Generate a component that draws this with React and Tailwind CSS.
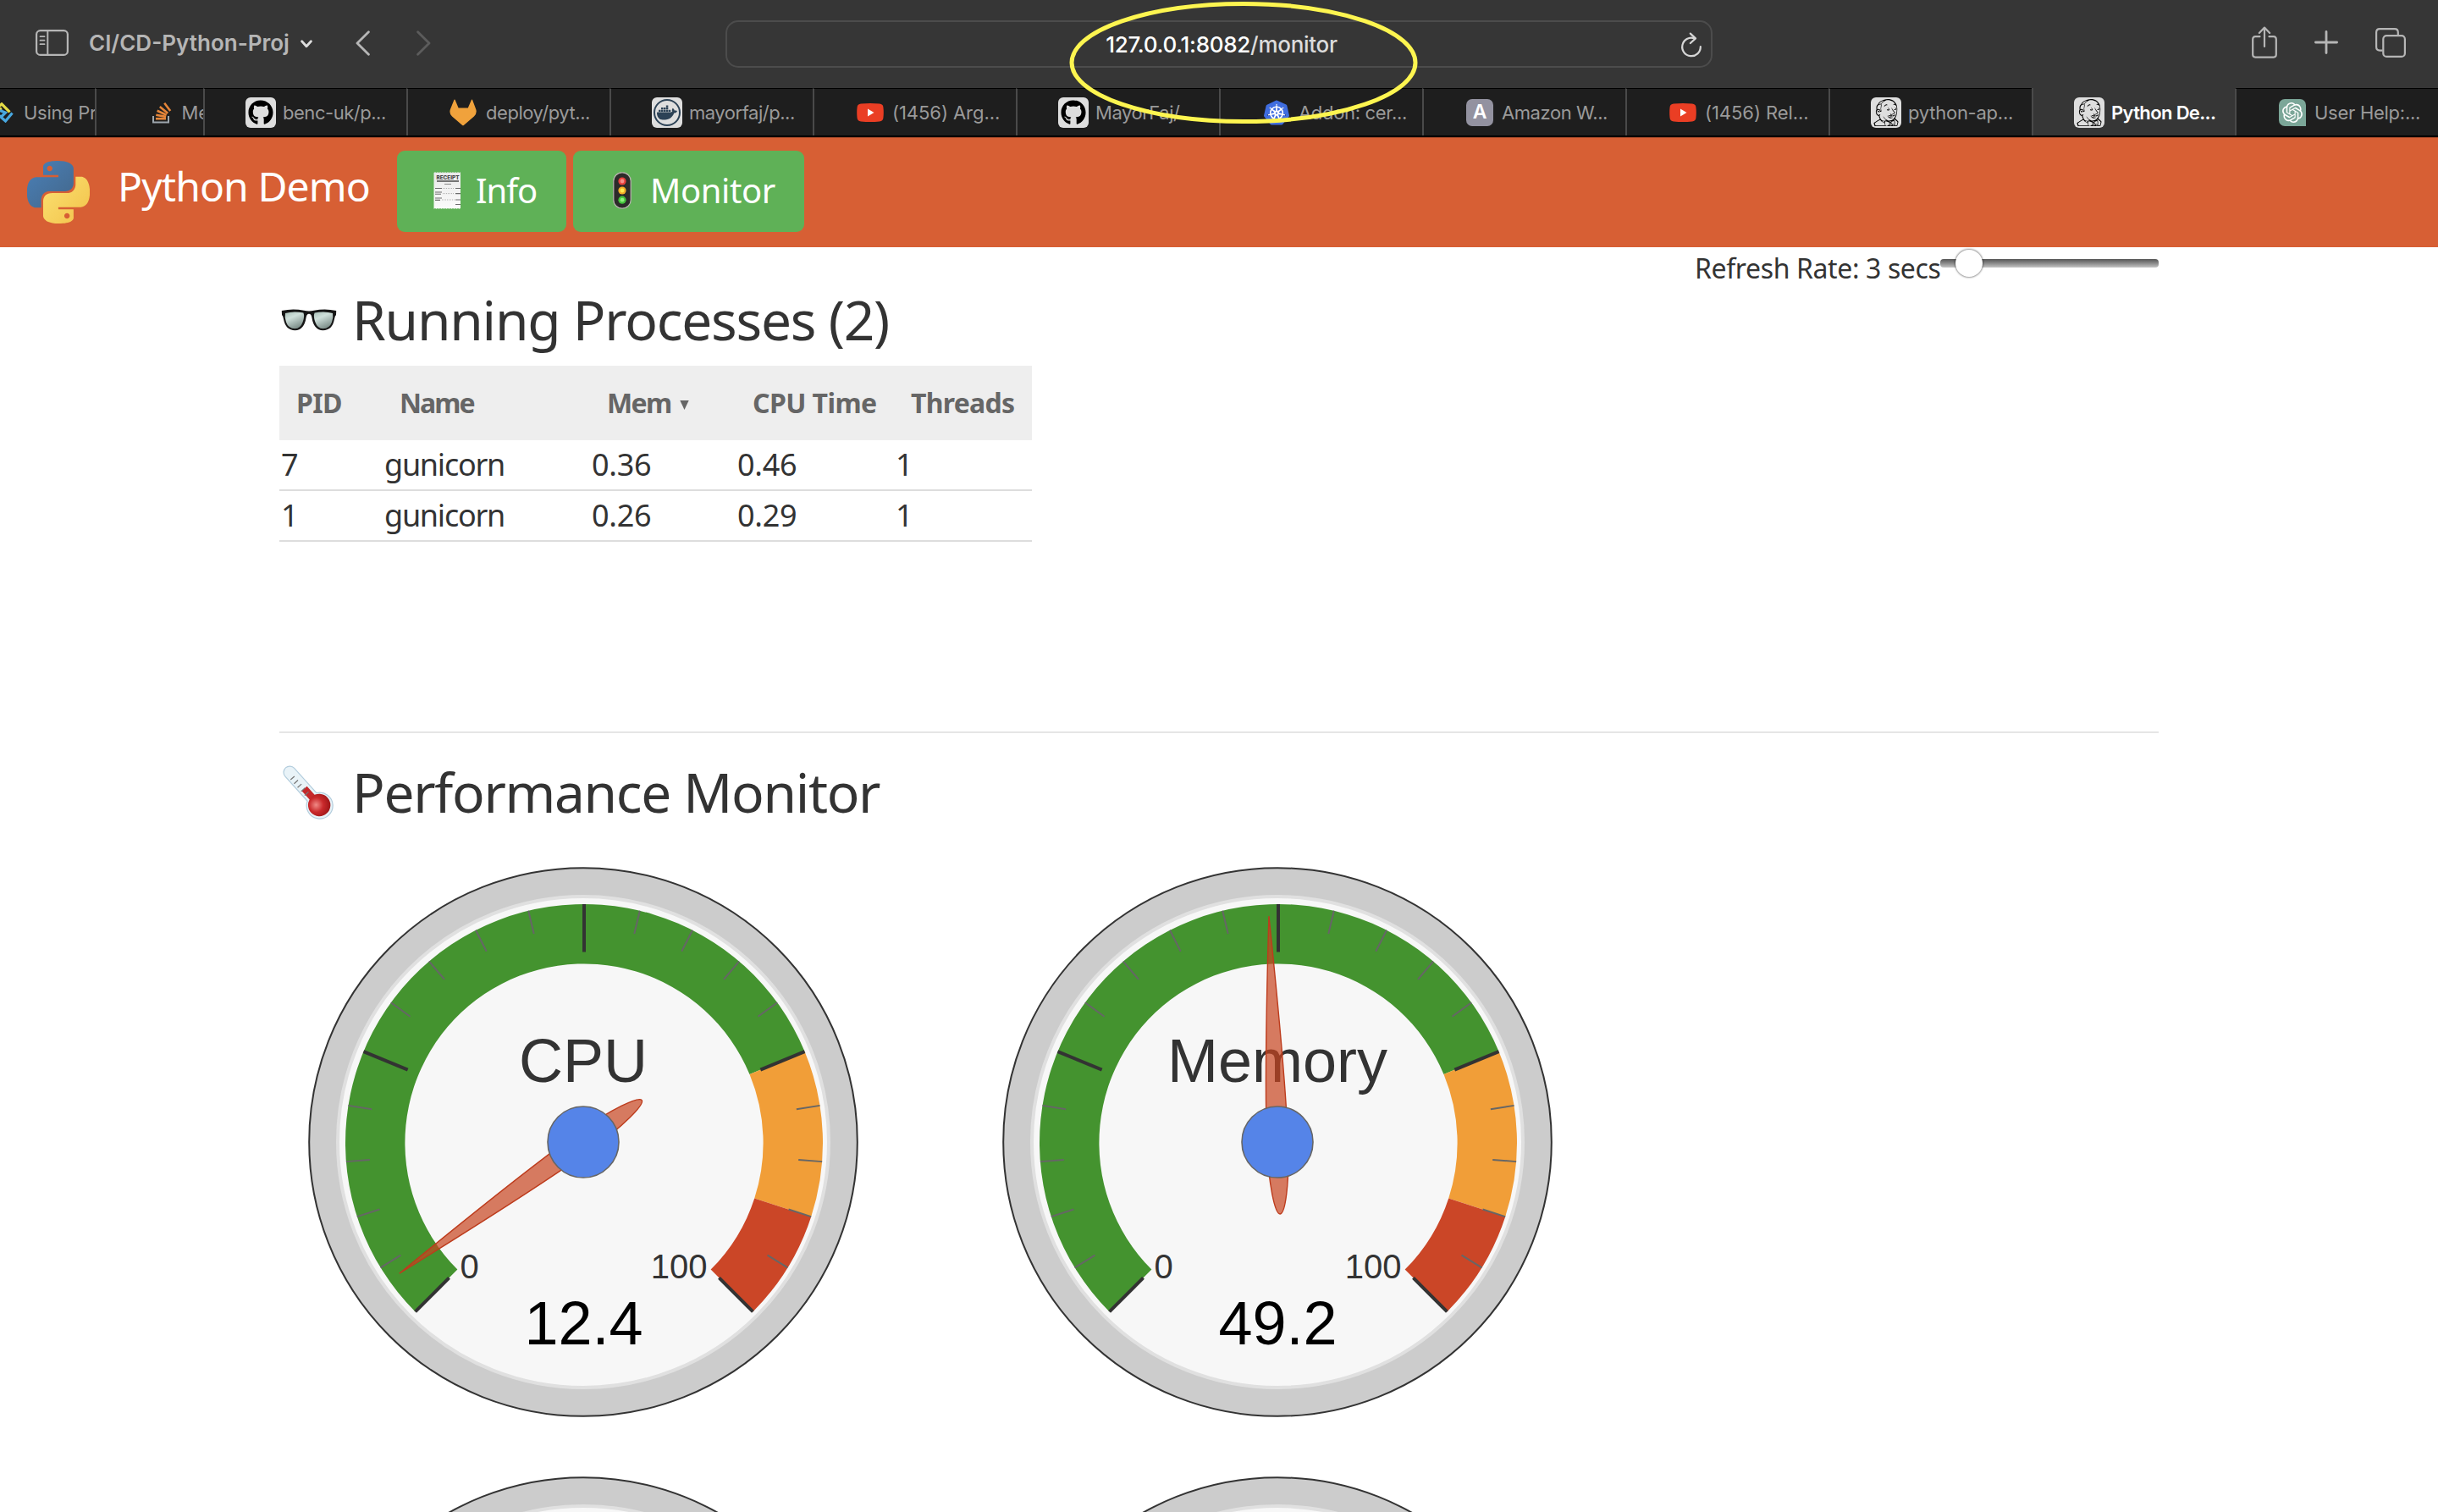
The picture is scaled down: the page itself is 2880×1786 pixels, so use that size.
import React from "react";
import { SiDocker, SiKubernetes, SiJenkins, SiOpenai } from "react-icons/si";
import { FaGithub } from "react-icons/fa";

/* ---------- Tab favicons ---------- */

function Tile({ children }) {
  return (
    <span className="flex h-9 w-9 items-center justify-center rounded-[6px] bg-[#dedede] text-black">{children}</span>
  );
}

const GithubIcon = () => (
  <Tile>
    <FaGithub className="h-[30px] w-[30px]" />
  </Tile>
);

const DockerIcon = () => (
  <Tile>
    <span className="flex h-8 w-8 items-center justify-center rounded-full border-2 border-[#2c4256]">
      <SiDocker className="h-6 w-6 text-[#2c4256]" />
    </span>
  </Tile>
);

const JenkinsIcon = () => (
  <Tile>
    <SiJenkins className="h-8 w-8" />
  </Tile>
);

const GitlabIcon = () => (
  <svg className="mr-[3px] ml-px h-8 w-8" viewBox="0 0 32 32" fill="#f0a23c">
    <path d="M6.5 0.8 L10.6 10.5 H21.8 L26 0.8 Q26.6 0.2 27 0.8 L31.4 12.5 Q32.6 17.4 29 20.5 L16.8 31 Q16 31.6 15.2 31 L3 20.5 Q-.6 17.4 .8 12.5 L5.5 0.8 Q6 0.2 6.5 0.8 Z" />
  </svg>
);

const YoutubeIcon = () => (
  <svg className="mx-0.5 h-8 w-8" viewBox="0 0 32 32">
    <path d="M5 5.6 Q16 4.2 27 5.6 Q31 6 31.4 9.5 Q32.2 16 31.4 22.5 Q31 26 27 26.4 Q16 27.8 5 26.4 Q1 26 .6 22.5 Q-.2 16 .6 9.5 Q1 6 5 5.6 Z" fill="#ea3e24" />
    <path d="M13 11.4 L20.5 16 L13 20.6 Z" fill="#fff" />
  </svg>
);

const KubernetesIcon = () => (
  <span className="mx-0.5 flex h-8 w-8 items-center justify-center bg-[radial-gradient(circle,#fff_10px,transparent_11px)]">
    <SiKubernetes className="h-[30px] w-[30px] text-[#3f6de0]" />
  </span>
);

const LetterIcon = () => (
  <span className="mx-0.5 flex h-8 w-8 items-center justify-center rounded-[7px] bg-[#9392a0] font-['Inter',sans-serif] text-[23px] leading-none font-semibold text-white">
    A
  </span>
);

const OpenAiIcon = () => (
  <span className="mx-0.5 flex h-8 w-8 items-center justify-center rounded-[7px] rounded-br-none bg-[#7ba698] text-white">
    <SiOpenai className="h-6 w-6" />
  </span>
);

const StackIcon = () => (
  <svg className="h-[26px] w-[24px] shrink-0" viewBox="0 0 24 26" fill="none">
    <path d="M1 17 V24.6 H19 V17" stroke="#9ea6ad" strokeWidth="2" />
    <g stroke="#e58539" strokeWidth="2.6">
      <path d="M4 20.2 H16" />
      <path d="M4.3 15.7 L16.1 17.9" />
      <path d="M5.6 10.8 L16.7 15.8" />
      <path d="M8.8 6 L18.2 13.7" />
      <path d="M14.2 1.8 L21.2 11" />
    </g>
  </svg>
);

const WeaveIcon = () => (
  <svg className="h-6 w-[30px] shrink-0" viewBox="0 0 30 24" fill="none" strokeWidth="3.2">
    <path d="M-6 9 L2 1.8 L11.5 11.4" stroke="#e5dc46" />
    <path d="M-3 10 L2 6.8" stroke="#e5dc46" />
    <path d="M-2 14.5 L6.5 22 L14.5 12.5 M1.5 17 L6.5 12 L0 9.5" stroke="#48a8e0" />
  </svg>
);

/* ---------- Toolbar ---------- */

function Toolbar() {
  return (
    <div className="grid h-[104px] shrink-0 grid-cols-[857px_1166px_857px] items-center bg-[#363636]">
      <div className="flex items-center pb-[3px] pl-[42px]">
        <svg className="h-[31px] w-[39px]" viewBox="0 0 39 31" fill="none" stroke="#b6b6b6">
          <rect x="1.1" y="1.1" width="36.8" height="28.8" rx="4.5" strokeWidth="2.2" />
          <path d="M14.3 1 V30" strokeWidth="2" />
          <path d="M5.5 8.2 H10.5 M5.5 12.7 H10.5 M5.5 17.2 H10.5" strokeWidth="1.8" strokeLinecap="round" />
        </svg>
        <span className="ml-6 w-[250px] text-[26px] leading-8 font-semibold whitespace-nowrap text-[#b6b6b6]">
          CI/CD-Python-Proj
        </span>
        <svg className="mt-0.5 h-[10px] w-[14px]" viewBox="0 0 14 10" fill="none" stroke="#dedede" strokeWidth="2.8" strokeLinecap="round" strokeLinejoin="round">
          <path d="M1.6 1.8 L7 7.8 L12.4 1.8" />
        </svg>
        <svg className="ml-[51px] h-[30px] w-[18px]" viewBox="0 0 18 30" fill="none" stroke="#b6b6b6" strokeWidth="2.8" strokeLinecap="round" strokeLinejoin="round">
          <path d="M15.4 1.8 L2 15 L15.4 28.2" />
        </svg>
        <svg className="ml-[53px] h-[30px] w-[18px]" viewBox="0 0 18 30" fill="none" stroke="#5c5c5c" strokeWidth="2.8" strokeLinecap="round" strokeLinejoin="round">
          <path d="M2.6 1.8 L16 15 L2.6 28.2" />
        </svg>
      </div>

      <div className="relative flex h-14 items-center justify-center rounded-[15px] border-2 border-[#4c4c4c]">
        <span className="pt-px pl-1.5 text-[26px] leading-8 font-medium tracking-[-0.28px] text-[#dcdcdc]">
          <span className="text-white">127.0.0.1:8082</span>/monitor
        </span>
        <svg className="absolute top-[12px] right-[10px] h-[30px] w-[26px]" viewBox="0 0 26 30" fill="none" stroke="#d6d6d6" strokeWidth="2.2" strokeLinecap="round" strokeLinejoin="round">
          <path d="M16.5 7.2 A10.8 10.8 0 1 0 23.8 17.2" />
          <path d="M11.8 1.6 L18 7.4 L11.8 13" />
        </svg>
        {/* highlight ring around the address */}
        <svg className="absolute top-[-26px] left-[402px] z-10 h-[150px] w-[416px]" viewBox="0 0 416 150" fill="none">
          <ellipse cx="208" cy="74" rx="203" ry="69.5" stroke="#fdf550" strokeWidth="5" />
        </svg>
      </div>

      <div className="flex items-center justify-end pr-[38px] pb-1">
        <svg className="h-[38px] w-[30px]" viewBox="0 0 30 38" fill="none" stroke="#b6b6b6" strokeWidth="2.2" strokeLinecap="round" strokeLinejoin="round">
          <path d="M9.5 12.2 H4.2 Q1.2 12.2 1.2 15.2 V33.6 Q1.2 36.6 4.2 36.6 H25.8 Q28.8 36.6 28.8 33.6 V15.2 Q28.8 12.2 25.8 12.2 H20.5" />
          <path d="M15 24 V1.8 M8.8 8 L15 1.6 L21.2 8" />
        </svg>
        <svg className="ml-[44px] h-[28px] w-[28px]" viewBox="0 0 28 28" stroke="#b6b6b6" strokeWidth="2.8" strokeLinecap="round">
          <path d="M14 1.4 V26.6 M1.4 14 H26.6" />
        </svg>
        <svg className="ml-[44px] h-[35px] w-[36px]" viewBox="0 0 36 35" fill="none" stroke="#b6b6b6" strokeWidth="2.2">
          <rect x="9.3" y="9.1" width="25.6" height="24.8" rx="4" />
          <path d="M8.6 26.6 H5.2 Q1.1 26.6 1.1 22.6 V5.2 Q1.1 1.1 5.2 1.1 H22.8 Q26.8 1.1 26.8 5.2 V8.4" />
        </svg>
      </div>
    </div>
  );
}

/* ---------- Tab strip ---------- */

const TABS = [
  { Icon: GithubIcon, text: "benc-uk/p...", track: "tracking-[-0.47px]" },
  { Icon: GitlabIcon, text: "deploy/pyt...", track: "tracking-[-0.45px]" },
  { Icon: DockerIcon, text: "mayorfaj/p...", track: "tracking-[-0.47px]" },
  { Icon: YoutubeIcon, text: "(1456) Arg...", track: "tracking-[-0.06px]" },
  { Icon: GithubIcon, text: "MayorFaj/...", track: "tracking-[-0.47px]" },
  { Icon: KubernetesIcon, text: "Addon: cer...", track: "tracking-[-0.32px]" },
  { Icon: LetterIcon, text: "Amazon W...", track: "tracking-[-0.42px]" },
  { Icon: YoutubeIcon, text: "(1456) Rel...", track: "tracking-[-0.06px]" },
  { Icon: JenkinsIcon, text: "python-ap...", track: "tracking-[-0.25px]" },
  { Icon: JenkinsIcon, text: "Python De...", track: "tracking-[-0.65px]", active: true },
  { Icon: OpenAiIcon, text: "User Help:...", track: "tracking-[-0.27px]" },
];

function TabStrip() {
  return (
    <div className="flex h-[58px] shrink-0 overflow-hidden border-b-2 border-black bg-[#1e1e1e] text-[22px] whitespace-nowrap text-[#9a9a9a]">
      <div className="flex w-[112px] shrink-0 items-center overflow-hidden border-t border-black">
        <WeaveIcon />
        <span className="-ml-0.5 pt-px tracking-[-0.3px]">Using Pr</span>
      </div>
      <div className="flex w-[128px] shrink-0 items-center overflow-hidden border-t border-l-2 border-t-black border-l-[#4a4a4a] pl-[66px]">
        <StackIcon />
        <span className="ml-[10.5px] pt-px">Me</span>
      </div>
      {TABS.map(({ Icon, text, track, active }, i) => (
        <div
          key={i}
          className={
            active
              ? "flex w-60 shrink-0 items-center border-l-2 border-[#4a4a4a] bg-[#363636] pt-px pl-12 font-semibold text-white"
              : "flex w-60 shrink-0 items-center border-t border-l-2 border-t-black border-l-[#4a4a4a] pl-12"
          }
        >
          <Icon />
          <span className={`ml-2 pt-px ${track}`}>{text}</span>
        </div>
      ))}
    </div>
  );
}

/* ---------- App header ---------- */

function PythonLogo() {
  return (
    <svg className="mb-px h-[74px] w-[74px]" viewBox="0.12 0 23.8 24">
      <defs>
        <linearGradient id="pyBlue" x1="0" y1="0" x2="0.8" y2="0.9">
          <stop offset="0" stopColor="#4a80b8" />
          <stop offset="1" stopColor="#446a90" />
        </linearGradient>
        <linearGradient id="pyYellow" x1="0" y1="0.1" x2="0.9" y2="0.9">
          <stop offset="0" stopColor="#fbe070" />
          <stop offset="1" stopColor="#f3c54e" />
        </linearGradient>
      </defs>
      <path
        fill="url(#pyBlue)"
        d="M14.25.18l.9.2.73.26.59.3.45.32.34.34.25.34.16.33.1.3.04.26.02.2-.01.13V8.5l-.05.63-.13.55-.21.46-.26.38-.3.31-.33.25-.35.19-.35.14-.33.1-.3.07-.26.04-.21.02H8.77l-.69.05-.59.14-.5.22-.41.27-.33.32-.27.35-.2.36-.15.37-.1.35-.07.32-.04.27-.02.21v3.06H3.17l-.21-.03-.28-.07-.32-.12-.35-.18-.36-.26-.36-.36-.35-.46-.32-.59-.28-.73-.21-.88-.14-1.05-.05-1.23.06-1.22.16-1.04.24-.87.32-.71.36-.57.4-.44.42-.33.42-.24.4-.16.36-.1.32-.05.24-.01h.16l.06.01h8.16v-.83H6.18l-.01-2.75-.02-.37.05-.34.11-.31.17-.28.25-.26.31-.23.38-.2.44-.18.51-.15.58-.12.64-.1.71-.06.77-.04.84-.02 1.27.05zm-6.3 1.98l-.23.33-.08.41.08.41.23.34.33.22.41.09.41-.09.33-.22.23-.34.08-.41-.08-.41-.23-.33-.33-.22-.41-.09-.41.09z"
      />
      <path
        fill="url(#pyYellow)"
        d="M21.04 6.11l.28.06.32.12.35.18.36.27.36.35.35.47.32.59.28.73.21.88.14 1.04.05 1.23-.06 1.23-.16 1.04-.24.86-.32.71-.36.57-.4.45-.42.33-.42.24-.4.16-.36.09-.32.05-.24.02-.16-.01h-8.22v.82h5.84l.01 2.76.02.36-.05.34-.11.31-.17.29-.25.25-.31.24-.38.2-.44.17-.51.15-.58.13-.64.09-.71.07-.77.04-.84.01-1.27-.04-1.07-.14-.9-.2-.73-.25-.59-.3-.45-.33-.34-.34-.25-.34-.16-.33-.1-.3-.04-.25-.02-.2.01-.13v-5.34l.05-.64.13-.54.21-.46.26-.38.3-.32.33-.24.35-.2.35-.14.33-.1.3-.06.26-.04.21-.02.13-.01h5.84l.69-.05.59-.14.5-.21.41-.28.33-.32.27-.35.2-.36.15-.36.1-.35.07-.32.04-.28.02-.21V6.07h2.09l.14.01zm-6.47 14.25l-.23.33-.08.41.08.41.23.33.33.23.41.08.41-.08.33-.23.23-.33.08-.41-.08-.41-.23-.33-.33-.23-.41-.08-.41.08z"
      />
    </svg>
  );
}

function ReceiptIcon() {
  return (
    <svg className="h-11 w-[34px]" viewBox="0 0 34 44">
      <defs>
        <linearGradient id="paper" x1="0" y1="0" x2="0" y2="1">
          <stop offset="0" stopColor="#e9e9e9" />
          <stop offset="1" stopColor="#fbfbfb" />
        </linearGradient>
      </defs>
      <path d="M0.5 1 l1.5 -.8 1.5 .8 1.5 -.8 1.5 .8 1.5 -.8 1.5 .8 1.5 -.8 1.5 .8 1.5 -.8 1.5 .8 1.5 -.8 1.5 .8 1.5 -.8 1.5 .8 1.5 -.8 1.5 .8 1.5 -.8 1.5 .8 1.5 -.8 1.5 .8 1.5 -.8 V43 l-1.5 .8 -1.5 -.8 -1.5 .8 -1.5 -.8 -1.5 .8 -1.5 -.8 -1.5 .8 -1.5 -.8 -1.5 .8 -1.5 -.8 -1.5 .8 -1.5 -.8 -1.5 .8 -1.5 -.8 -1.5 .8 -1.5 -.8 -1.5 .8 -1.5 -.8 -1.5 .8 -1.5 -.8 -1.5 .8 Z" fill="url(#paper)" />
      <text x="17" y="8.8" textAnchor="middle" fontSize="6.2" fontWeight="800" fontFamily="Inter, sans-serif" fill="#444" textLength="27" lengthAdjust="spacingAndGlyphs">RECEIPT</text>
      <path d="M4 11 H30" stroke="#555" strokeWidth="1.6" />
      <path d="M13 14.5 H21" stroke="#888" strokeWidth="1" />
      <g stroke="#6c6c6c" strokeWidth="1.1">
        <path d="M2 19.5 H10 M26 19.5 H32 M2 24 H10 M2 26.2 H9 M26 25.6 H32 M2 31 H10 M2 33.4 H8 M26 33 H32 M26 38.5 H32" />
        <path d="M11 19.5 H25 M11 25.6 H25 M10 33 H25" strokeWidth=".5" strokeDasharray="1 1" />
      </g>
    </svg>
  );
}

function TrafficLightIcon() {
  return (
    <svg className="h-11 w-[22px]" viewBox="0 0 22 44">
      <rect x="0.8" y="0.8" width="20.4" height="42.4" rx="10" fill="#2c2b2a" stroke="#b9b4b0" strokeWidth="1.2" />
      <circle cx="11" cy="11" r="4.6" fill="#e8403c" />
      <circle cx="11" cy="11" r="2.4" fill="#f58f8a" />
      <circle cx="11" cy="22" r="4.6" fill="#f2ae27" />
      <circle cx="11" cy="22" r="2.4" fill="#fde94f" />
      <circle cx="11" cy="33.2" r="4.6" fill="#43c43c" />
      <circle cx="11" cy="33.2" r="2.4" fill="#8cf07c" />
    </svg>
  );
}

function Header() {
  return (
    <header className="flex h-[130px] shrink-0 items-center bg-[#d75f34] pl-8 font-['Noto_Sans','Open_Sans',sans-serif] text-white shadow-[inset_0_1px_0_#a84b2a]">
      <PythonLogo />
      <h1 className="ml-[33px] w-[330px] pb-[15px] text-[48px] leading-[60px] font-normal tracking-[-0.9px] whitespace-nowrap">
        Python Demo
      </h1>
      <button className="mb-0.5 flex h-24 w-[200px] items-center rounded-[9px] bg-[#5fb157] pl-[43px] text-[40px] leading-[56px]">
        <span className="pb-0.5"><ReceiptIcon /></span>
        <span className="ml-4 pb-[2px] tracking-[-1.01px]">Info</span>
      </button>
      <button className="mb-0.5 ml-2 flex h-24 w-[273px] items-center rounded-[9px] bg-[#5fb157] pl-[47px] text-[40px] leading-[56px]">
        <span className="pb-0.5"><TrafficLightIcon /></span>
        <span className="ml-[22px] pb-[2px] tracking-[-0.4px]">Monitor</span>
      </button>
    </header>
  );
}

/* ---------- Processes ---------- */

function GlassesIcon() {
  return (
    <svg className="h-[26px] w-[66px]" viewBox="0 0 66 26">
      <defs>
        <linearGradient id="lens" x1="0" y1="0" x2="0.5" y2="1">
          <stop offset="0" stopColor="#a9c0b8" />
          <stop offset="0.4" stopColor="#cfe0db" />
          <stop offset="1" stopColor="#7f918c" />
        </linearGradient>
      </defs>
      <path d="M0.8 2 Q14 -1 27 1.8 Q33 3.4 39 1.8 Q52 -1 65.2 2 L65 7 Q63.6 8 63 12 Q60.6 25.2 49.5 25.2 Q38.6 25 36.4 10 Q35.6 5.8 33 5.8 Q30.4 5.8 29.6 10 Q27.4 25 16.5 25.2 Q5.4 25.2 3 12 Q2.4 8 1 7 Z" fill="#161616" />
      <path d="M5 5 Q15 2 26.4 4.6 Q28.2 9 25.6 15.6 Q23 23.2 16.4 23.2 Q8.6 23.2 6 15.6 Q4 9.6 5 5 Z" fill="url(#lens)" />
      <path d="M61 5 Q51 2 39.6 4.6 Q37.8 9 40.4 15.6 Q43 23.2 49.6 23.2 Q57.4 23.2 60 15.6 Q62 9.6 61 5 Z" fill="url(#lens)" />
    </svg>
  );
}

const PROCESSES = [
  ["7", "gunicorn", "0.36", "0.46", "1"],
  ["1", "gunicorn", "0.26", "0.29", "1"],
];

const COLS = "grid grid-cols-[121px_246px_172px_187px_163px]";

function ProcessTable() {
  return (
    <div className="mt-[19px] w-[889px]">
      <div className={`${COLS} h-[88px] items-center bg-[#eee] text-[32px] leading-[44px] font-bold whitespace-nowrap text-[#666]`}>
        <span className="pl-5 tracking-[-0.66px]">PID</span>
        <span className="pl-[21px] tracking-[-2px]">Name</span>
        <span className="flex items-center pl-5 tracking-[-1.64px]">
          Mem
          <svg className="mt-[4px] ml-[10px] h-[11px] w-[11px]" viewBox="0 0 11 11">
            <path d="M0.3 0 H10.7 L5.5 11 Z" fill="#666" />
          </svg>
        </span>
        <span className="pl-5 tracking-[-0.59px]">CPU Time</span>
        <span className="pl-5 tracking-[-0.74px]">Threads</span>
      </div>
      {PROCESSES.map((row) => (
        <div key={row[0]} className={`${COLS} h-[60px] items-center border-b-2 border-[#ddd] text-[36px] leading-[50px] text-[#333]`}>
          {row.map((cell, i) => (
            <span key={i} className={i === 1 ? "pl-[3px] tracking-[-1.26px]" : "pl-0.5 tracking-[-0.28px]"}>
              {cell}
            </span>
          ))}
        </div>
      ))}
    </div>
  );
}

function RefreshRate() {
  return (
    <label className="flex h-[50px] text-[32px] leading-[50px] tracking-[-0.38px] whitespace-nowrap text-[#333]">
      <span className="w-[290px]">Refresh Rate: 3 secs</span>
      <span className="relative mt-3.5 h-[10px] w-[258px] rounded-[4px] bg-linear-to-b from-[#555] to-[#c4c4c4]">
        <span className="absolute top-[-11px] left-[17.5px] h-8 w-8 rounded-full bg-white shadow-[0_0_2px_1px_rgba(0,0,0,0.4)]" />
      </span>
    </label>
  );
}

/* ---------- Gauges ---------- */

function ThermometerIcon() {
  return (
    <svg className="h-[64px] w-[64px]" viewBox="0 0 62 62">
      <defs>
        <radialGradient id="bulb" cx="0.4" cy="0.4" r="0.65">
          <stop offset="0" stopColor="#f08a86" />
          <stop offset="0.5" stopColor="#c9292b" />
          <stop offset="1" stopColor="#9c1517" />
        </radialGradient>
      </defs>
      <g transform="rotate(-42 8 8)">
        <path d="M1 8 A7 7 0 0 1 15 8 V46 A15 15 0 1 1 1 46 Z" fill="#e9f3f8" stroke="#b3cddd" strokeWidth="1.2" />
        <path d="M4 33 H12 V52 H4 Z" fill="#c5282b" />
        <path d="M8 15 H14 M8 21 H14 M8 27 H14 M8 33 H14 M8 39 H14" stroke="#777" strokeWidth="1.2" transform="translate(-5 0)" />
        <circle cx="8" cy="58.5" r="12.8" fill="url(#bulb)" />
      </g>
    </svg>
  );
}

const point = (r, deg) => {
  const a = (deg * Math.PI) / 180;
  return [331 + r * Math.sin(a), 331 - r * Math.cos(a)];
};

const angle = (value) => -135 + value * 2.7;

function band(from, to) {
  const outer = 282;
  const inner = 211.6;
  const [a, b] = [angle(from), angle(to)];
  const large = b - a > 180 ? 1 : 0;
  const [x1, y1] = point(outer, a);
  const [x2, y2] = point(outer, b);
  const [x3, y3] = point(inner, b);
  const [x4, y4] = point(inner, a);
  return `M${x1} ${y1} A${outer} ${outer} 0 ${large} 1 ${x2} ${y2} L${x3} ${y3} A${inner} ${inner} 0 ${large} 0 ${x4} ${y4} Z`;
}

const TICKS = Array.from({ length: 21 }, (_, i) => {
  const major = i % 5 === 0;
  const [x1, y1] = point(282, angle(i * 5));
  const [x2, y2] = point(major ? 225.5 : 254, angle(i * 5));
  return { x1, y1, x2, y2, major };
});

/* `needle` is where the needle stands; it lags behind `value` while moving. */
function Gauge({ label, value, needle = value }) {
  return (
    <svg className="h-[660px] w-[660px]" viewBox="0 0 660 660" fontFamily="'Liberation Sans', Arial, sans-serif">
      <circle cx="330" cy="330" r="323.8" fill="#ccc" stroke="#333" strokeWidth="2" />
      <circle cx="330" cy="330" r="290" fill="#f7f7f7" stroke="#e0e0e0" strokeWidth="4" />
      <path d={band(0, 75)} fill="#44932f" />
      <path d={band(75, 90)} fill="#f19e38" />
      <path d={band(90, 100)} fill="#cb4627" />
      {TICKS.map(({ major, ...line }, i) => (
        <line key={i} {...line} stroke={major ? "#333" : "#666"} strokeWidth={major ? 4 : 2} />
      ))}
      {label && (
        <>
          <text x="330" y="258.5" fontSize="72" textAnchor="middle" fill="#333">{label}</text>
          <text x="184.5" y="491" fontSize="40" fill="#333">0</text>
          <text x="476.5" y="491" fontSize="40" textAnchor="end" fill="#333">100</text>
          <text x="330.5" y="569" fontSize="72" textAnchor="middle" fill="#000">{value}</text>
        </>
      )}
      <g transform={`translate(330 330) rotate(${angle(needle)})`}>
        <path d="M0 -267 Q-12.5 -80 -12.5 0 C-12.5 50 -6 85 0 85 C6 85 12.5 50 12.5 0 Q12.5 -80 0 -267 Z" fill="#c8451f" fillOpacity="0.7" stroke="#bd3c1d" strokeWidth="1.4" />
      </g>
      <circle cx="330" cy="330" r="42" fill="#5584e8" stroke="#666" strokeWidth="1.6" />
    </svg>
  );
}

/* ---------- Page ---------- */

export default function App() {
  return (
    <div className="flex h-[1786px] w-[2880px] flex-col overflow-hidden bg-white font-['Inter',sans-serif]">
      <Toolbar />
      <TabStrip />
      <Header />
      <main className="mx-auto w-[2220px] font-['Noto_Sans','Open_Sans',sans-serif]">
        <div className="flex h-[572px] justify-between">
          <section className="pt-[51px]">
            <h2 className="flex h-[70px] items-center text-[64px] leading-[70px] tracking-[-1.22px] whitespace-nowrap text-[#333]">
              <span className="w-[86px] pl-0.5"><GlassesIcon /></span>
              Running Processes (2)
            </h2>
            <ProcessTable />
          </section>
          <RefreshRate />
        </div>
        <hr className="border-t-2 border-[#e5e5e5]" />
        <h2 className="mt-[35px] flex h-[70px] items-center text-[64px] leading-[70px] tracking-[-1.32px] whitespace-nowrap text-[#333]">
          <span className="w-[86px] pl-1"><ThermometerIcon /></span>
          Performance Monitor
        </h2>
        <section className="mt-[48px] ml-[29px] grid w-[1480px] grid-cols-2 gap-x-40 gap-y-[60px]">
          <Gauge label="CPU" value={12.4} needle={3.5} />
          <Gauge label="Memory" value={49.2} />
          <Gauge value={50} />
          <Gauge value={50} />
        </section>
      </main>
    </div>
  );
}
